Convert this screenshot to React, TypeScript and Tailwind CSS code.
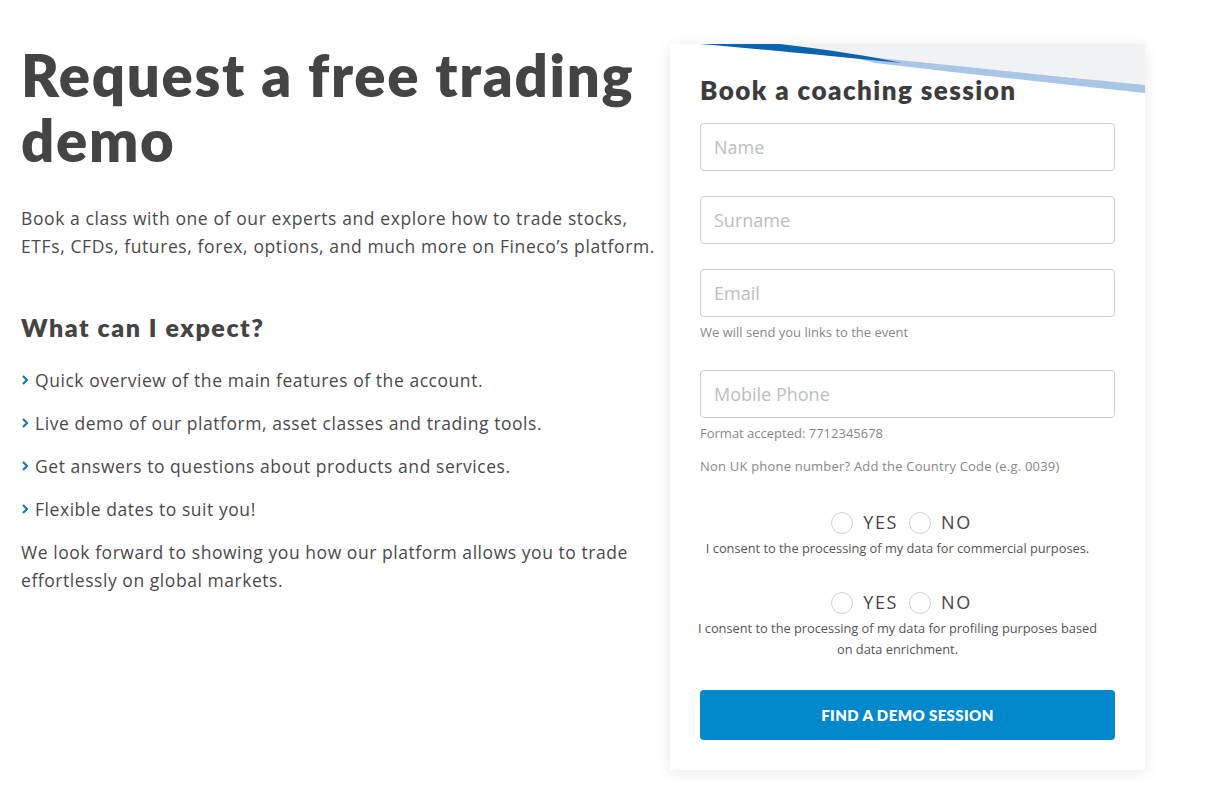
const EXPECT = [
  "Quick overview of the main features of the account.",
  "Live demo of our platform, asset classes and trading tools.",
  "Get answers to questions about products and services.",
  "Flexible dates to suit you!",
];

function Chevron() {
  return (
    <svg width="9" height="12" viewBox="0 0 9 12" className="mr-[5px] shrink-0">
      <path d="M2 2 L6 6 L2 10" fill="none" stroke="#1a75bb" strokeWidth="2.2" />
    </svg>
  );
}

function Field({ placeholder }: { placeholder: string }) {
  return (
    <input
      placeholder={placeholder}
      className="h-[48px] w-full rounded-[4px] border border-[#cccccc] bg-white px-[13px] font-['Open_Sans',sans-serif] text-[18px] text-[#444] outline-none placeholder:text-[#bdbdbd]"
    />
  );
}

function Radio({ label }: { label: string }) {
  return (
    <label className="flex items-center gap-[10px]">
      <span className="h-[22px] w-[22px] rounded-full border border-[#cfcfcf] bg-white" />
      <span className="text-[18px] tracking-[1.6px] text-[#444]">{label}</span>
    </label>
  );
}

function Consent({ text }: { text: string }) {
  return (
    <div className="-ml-[10px] mr-[10px] flex flex-col items-center">
      <div className="flex items-center gap-[11px] pl-[8px]">
        <Radio label="YES" />
        <Radio label="NO" />
      </div>
      <p className="mt-[2px] text-center text-[12.8px] leading-[21px] text-[#555]">{text}</p>
    </div>
  );
}

export default function App() {
  return (
    <div className="min-h-[799px] bg-white font-['Open_Sans',sans-serif] text-[#444]">
      <div className="flex items-start pt-[44px]">
        <div className="w-[670px] shrink-0 pl-[21px]">
          <h1 className="mt-[-2px] font-['Lato',sans-serif] text-[58px] font-extrabold leading-[65px] tracking-[1.7px] text-[#444]">
            Request a free trading demo
          </h1>
          <p className="mt-[32px] text-[17.5px] leading-[28px] tracking-[0.6px] text-[#4a4a4a]">
            Book a class with one of our experts and explore how to trade stocks, ETFs, CFDs, futures, forex, options, and much more on Fineco’s platform.
          </p>
          <h2 className="mt-[51px] font-['Lato',sans-serif] text-[25px] font-extrabold leading-[32px] tracking-[1.55px] text-[#444]">
            What can I expect?
          </h2>
          <ul className="mt-[23px] flex flex-col gap-[15px]">
            {EXPECT.map((item) => (
              <li key={item} className="flex items-center text-[17.5px] leading-[28px] tracking-[0.55px] text-[#4a4a4a]">
                <Chevron />
                {item}
              </li>
            ))}
          </ul>
          <p className="mt-[15px] text-[17.5px] leading-[28px] tracking-[0.55px] text-[#4a4a4a]">
            We look forward to showing you how our platform allows you to trade effortlessly on global markets.
          </p>
        </div>

        <div className="relative w-[475px] shrink-0 overflow-hidden bg-white px-[30px] pb-[30px] pt-[30px] shadow-[0_2px_14px_rgba(0,0,0,0.09)]">
          <svg width="475" height="56" viewBox="0 0 475 56" className="absolute left-0 top-0">
            <path d="M30 0 C 180 10 330 26 475 41 L475 0 Z" fill="#f1f2f4" />
            <path d="M170 10 C 280 21 380 32 475 41 L475 49 C 380 39 290 29 205 19 Z" fill="#a9c6e6" />
            <path d="M30 0 L110 0 C 160 6 200 12 232 19 C 160 12 90 5 30 0 Z" fill="#0b62ad" />
          </svg>
          <h3 className="relative font-['Lato',sans-serif] text-[26px] font-extrabold leading-[32px] tracking-[1.45px] text-[#3c3c3c]">
            Book a coaching session
          </h3>
          <div className="mt-[17px] flex flex-col">
            <Field placeholder="Name" />
            <div className="mt-[25px]">
              <Field placeholder="Surname" />
            </div>
            <div className="mt-[25px]">
              <Field placeholder="Email" />
            </div>
            <p className="mt-[7px] text-[13px] leading-[16px] text-[#888]">We will send you links to the event</p>
            <div className="mt-[30px]">
              <Field placeholder="Mobile Phone" />
            </div>
            <p className="mt-[7px] text-[13px] leading-[16px] text-[#888]">Format accepted: 7712345678</p>
            <p className="mt-[17px] text-[13px] leading-[16px] tracking-[0.2px] text-[#888]">
              Non UK phone number? Add the Country Code (e.g. 0039)
            </p>
            <div className="mt-[35px]">
              <Consent text="I consent to the processing of my data for commercial purposes." />
            </div>
            <div className="mt-[30px]">
              <Consent text="I consent to the processing of my data for profiling purposes based on data enrichment." />
            </div>
            <button className="mt-[30px] h-[50px] w-full rounded-[4px] bg-[#0088cc] font-['Lato',sans-serif] text-[15px] font-extrabold uppercase tracking-[0.4px] text-white">
              Find a demo session
            </button>
          </div>
        </div>
      </div>
    </div>
  );
}
